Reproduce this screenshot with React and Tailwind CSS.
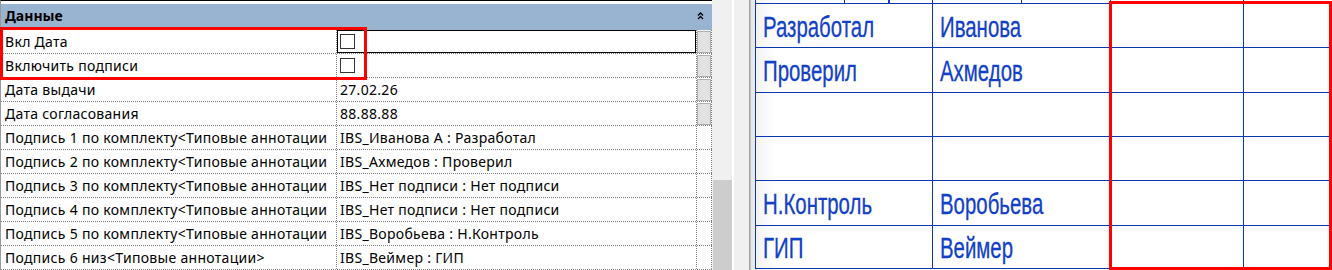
import React from 'react';

// Revit properties grid on the left, title block fragment on the right
const props = [
  { label: 'Вкл Дата', check: true, focus: true, btn: true },
  { label: 'Включить подписи', check: true, btn: true },
  { label: 'Дата выдачи', value: '27.02.26', btn: true },
  { label: 'Дата согласования', value: '88.88.88', btn: true },
  { label: 'Подпись 1 по комплекту<Типовые аннотации', value: 'IBS_Иванова А : Разработал' },
  { label: 'Подпись 2 по комплекту<Типовые аннотации', value: 'IBS_Ахмедов : Проверил' },
  { label: 'Подпись 3 по комплекту<Типовые аннотации', value: 'IBS_Нет подписи : Нет подписи' },
  { label: 'Подпись 4 по комплекту<Типовые аннотации', value: 'IBS_Нет подписи : Нет подписи' },
  { label: 'Подпись 5 по комплекту<Типовые аннотации', value: 'IBS_Воробьева : Н.Контроль' },
  { label: 'Подпись 6 низ<Типовые аннотации>', value: 'IBS_Веймер : ГИП' },
];

const sheet = [
  { h: 'h-[44px]', role: 'Разработал', name: 'Иванова' },
  { h: 'h-[45px]', role: 'Проверил', name: 'Ахмедов' },
  { h: 'h-[44px]', role: '', name: '' },
  { h: 'h-[44px]', role: '', name: '' },
  { h: 'h-[45px]', role: 'Н.Контроль', name: 'Воробьева' },
  { h: 'h-[43px]', role: 'ГИП', name: 'Веймер' },
];

const SheetText = ({ children }) => (
  <span className="inline-block origin-left scale-x-68 whitespace-nowrap text-[30px] leading-none text-[#1240c6] [-webkit-text-stroke:0.3px_#1240c6]">
    {children}
  </span>
);

const PropRow = ({ row }) => (
  <div className="flex h-[24px] border-b border-dotted border-[#808080]">
    <div className="w-[335px] flex items-center pl-[4px] overflow-hidden whitespace-nowrap">
      {row.label}
    </div>
    <div
      className={`w-[360px] flex items-center pl-[3px] border-l border-dotted border-[#808080] whitespace-nowrap ${
        row.focus ? 'ring-1 ring-inset ring-black' : ''
      }`}
    >
      {row.check ? (
        <div className="w-[15px] h-[15px] border border-[#333333] bg-white" />
      ) : (
        row.value
      )}
    </div>
    <div className="w-[16px] flex items-center border-l border-r border-dotted border-[#808080]">
      {row.btn && <div className="w-full h-[22px] bg-[#e1e1e1] border border-[#b0b0b0]" />}
    </div>
  </div>
);

export default function App() {
  return (
    <div className="w-[1332px] h-[270px] flex bg-white overflow-hidden">
      {/* properties */}
      <div className="relative w-[712px] h-[270px] shrink-0 border-t border-black border-l border-l-[#9a9a9a] font-['Noto_Sans',sans-serif] text-[14px] tracking-[0.3px] leading-none text-black">
        <div className="pt-[3px]">
          <div className="h-[26px] flex items-center justify-between pl-[4px] pr-[8px] pb-[3px] bg-[#99b4d1] font-bold tracking-normal">
            <span>Данные</span>
            <svg width="7" height="8" viewBox="0 0 7 8" className="mt-[1px]">
              <path d="M1 3.5 L3.5 1 L6 3.5 M1 7 L3.5 4.5 L6 7" fill="none" stroke="#000" strokeWidth="1.4" />
            </svg>
          </div>
          {props.map((row, i) => (
            <PropRow key={i} row={row} />
          ))}
        </div>
        <div className="absolute left-[-1px] top-[26px] w-[367px] h-[53px] border-[3px] border-[#ff0000]" />
      </div>

      {/* scrollbar */}
      <div className="w-[20px] shrink-0 flex flex-col bg-[#f0f0f0]">
        <div className="h-[180px]" />
        <div className="flex-1 ml-[1px] bg-[#cdcdcd]" />
      </div>
      <div className="w-[2px] shrink-0 bg-white" />
      <div className="w-[15px] shrink-0 bg-[#f0f0f0]" />
      <div className="w-[2px] shrink-0 border-l border-[#a0a0a0] bg-[#c4c4c4]" />

      {/* drawing */}
      <div className="relative flex-1 bg-[linear-gradient(to_right,#e4e4e4,#f3f3f3_6px,#ffffff_24px)] font-['Liberation_Sans',Arial,sans-serif]">
        <div className="ml-[4px] w-[576px] border-l border-[#0a37b0]">
          <div className="flex h-[4px] border-b border-[#0a37b0]">
            <div className="w-[89px] border-r border-[#0a37b0]" />
            <div className="w-[88px] border-r border-[#0a37b0] flex justify-center">
              <div className="w-[2px] h-[3px] bg-[#1240c6]" />
            </div>
            <div className="w-[89px] border-r border-[#0a37b0]" />
            <div className="w-[89px] border-r border-[#0a37b0]" />
            <div className="w-[133px] border-r border-[#0a37b0]" />
          </div>
          {sheet.map((r, i) => (
            <div key={i} className={`flex ${r.h} border-b border-[#0a37b0]`}>
              <div className="w-[177px] flex items-center pl-[7px] pt-[2px] border-r border-[#0a37b0]">
                <SheetText>{r.role}</SheetText>
              </div>
              <div className="w-[178px] flex items-center pl-[7px] pt-[2px] border-r border-[#0a37b0]">
                <SheetText>{r.name}</SheetText>
              </div>
              <div className="w-[133px] border-r border-[#0a37b0]" />
              <div className="w-[87px] border-r border-[#0a37b0]" />
            </div>
          ))}
        </div>
        <div className="absolute left-[358px] top-[1px] w-[223px] h-[269px] border-[3px] border-[#ff0000]" />
      </div>
    </div>
  );
}
